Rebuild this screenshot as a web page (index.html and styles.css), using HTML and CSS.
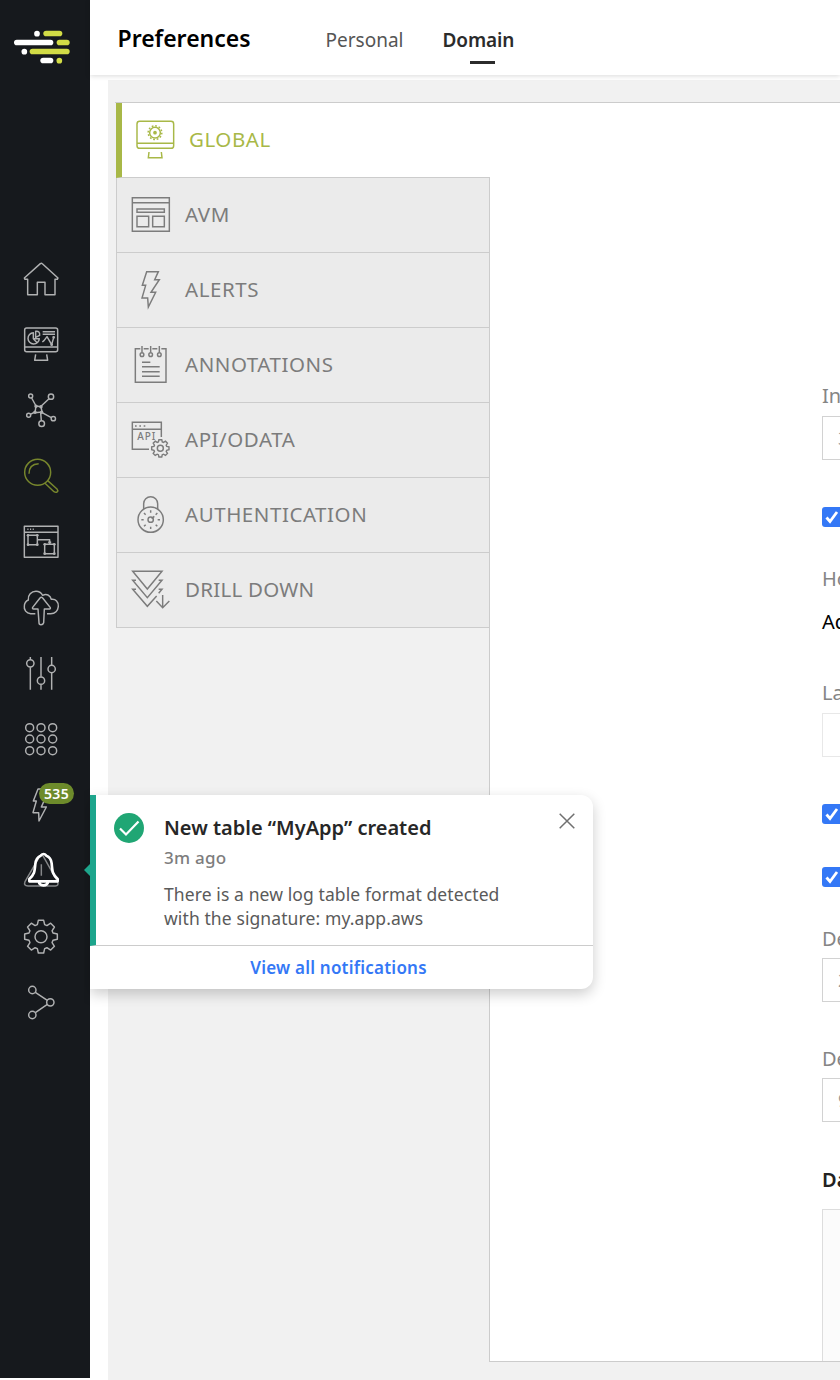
FILE: index.html
```html
<!DOCTYPE html>
<html lang="en">
<head>
<meta charset="utf-8">
<title>Preferences</title>
<link rel="stylesheet" href="styles.css">
</head>
<body>
<svg class="defs" width="0" height="0">
  <defs>
    <path id="gear" d="M-11-36L-8-49H8L11-36L17.7-33.2L29-40.3L40.3-29L33.2-17.7L36-11L49-8V8L36 11L33.2 17.7L40.3 29L29 40.3L17.7 33.2L11 36L8 49H-8L-11 36L-17.7 33.2L-29 40.3L-40.3 29L-33.2 17.7L-36 11L-49 8V-8L-36-11L-33.2-17.7L-40.3-29L-29-40.3L-17.7-33.2Z"/>
  </defs>
</svg>
<div class="app">
  <aside class="sidebar">
    <svg class="logo" viewBox="0 0 270 240">
      <g fill="#fff"><circle cx="111" cy="101" r="8.5"/><rect x="42" y="119" width="118" height="17" rx="8.5"/><circle cx="73" cy="155" r="8.5"/><rect x="121" y="173" width="39" height="17" rx="8.5"/></g>
      <g fill="#d2dc46"><rect x="130" y="92" width="57" height="17" rx="8.5"/><rect x="170" y="119" width="39" height="17" rx="8.5"/><rect x="89" y="146" width="120" height="17" rx="8.5"/><circle cx="178" cy="182" r="8.5"/></g>
    </svg>
    <nav class="nav">
      <svg class="icon" viewBox="0 -9 270 198"><path d="M83 134V88H75L73 84L121 41Q124 38 127 41L174 84L172 88H165V134H135V97H112V134Z"/></svg>
      <svg class="icon" viewBox="0 189 270 198"><rect x="74" y="234" width="99" height="71" rx="6"/><path d="M74 291H173M107 313L104 331H143L140 313M100 248A17 17 0 1 0 118 266H100ZM107 244Q120 242 119 256L107 262ZM100 266L112 279M128 245H165M128 253H165M127 276L132 272L141 260L155 284L161 263"/><circle cx="161" cy="262" r="2"/><circle cx="155" cy="284" r="2"/></svg>
      <svg class="icon" viewBox="0 387 270 198"><circle cx="92" cy="438" r="6"/><circle cx="153" cy="440" r="8"/><circle cx="86" cy="496" r="6"/><circle cx="125" cy="521" r="8.5"/><circle cx="160" cy="506" r="6.5"/><path d="M95 444L108 468M147 446L123 469M91 493L105 486M122 488L124 512M125 487L154 503M108 468L123 470L126 486L105 488Z"/><circle cx="108" cy="469" r="3"/><circle cx="123" cy="470" r="3"/><circle cx="105" cy="487" r="3"/><circle cx="125" cy="487" r="3"/></svg>
      <svg class="icon icon-current" viewBox="0 15 270 198"><circle cx="113" cy="97" r="39"/><path d="M87 101Q87 72 116 71M135 130L162 155Q168 159 172 155Q175 152 171 147L143 122"/></svg>
      <svg class="icon" viewBox="0 213 270 198"><path d="M73 259H174V352H73ZM73 277H174M84 286H112V314H84ZM134 313H163V341H134ZM113 299H149V309M145 305L149 310L153 305"/><path d="M82 268H102" stroke-dasharray="3.5 4.5"/><g class="solid"><circle cx="84" cy="286" r="4"/><circle cx="112" cy="286" r="4"/><circle cx="84" cy="314" r="4"/><circle cx="112" cy="314" r="4"/><circle cx="134" cy="313" r="4"/><circle cx="163" cy="313" r="4"/><circle cx="134" cy="341" r="4"/><circle cx="163" cy="341" r="4"/></g></svg>
      <svg class="icon" viewBox="0 411 270 198"><path d="M106 521H92C79 520 71 510 73 497C74 486 80 482 85 480C83 465 94 454 108 454C117 454 124 459 128 466C139 460 151 465 154 478C167 476 176 486 175 499C174 512 165 521 152 521H141"/><path d="M120 474Q124 470 128 474L151 503Q152 507 147 507H133L131 548Q129 554 123 554Q117 554 117 548L114 507H101Q96 507 98 502Z"/></svg>
      <svg class="icon" viewBox="0 9 270 198"><path d="M91 51V59M91 82V149M123 51V110M123 134V149M155 51V75M155 98V149"/><circle cx="91" cy="70" r="11"/><circle cx="123" cy="122" r="11"/><circle cx="155" cy="87" r="11"/></svg>
      <svg class="icon" viewBox="0 207 270 198"><circle cx="89" cy="263" r="12"/><circle cx="123" cy="263" r="12"/><circle cx="158" cy="263" r="12"/><circle cx="89" cy="297" r="12"/><circle cx="123" cy="297" r="12"/><circle cx="158" cy="297" r="12"/><circle cx="89" cy="332" r="12"/><circle cx="123" cy="332" r="12"/><circle cx="158" cy="332" r="12"/></svg>
      <div class="nav-alerts">
        <svg class="icon" viewBox="0 405 270 198"><path d="M135 447H114L100 483H109L99 518H116L117 543L139 501H124L138 470"/></svg>
        <span class="badge">535</span>
      </div>
      <svg class="icon" viewBox="0 3 270 198"><path class="dim" d="M119 49Q124 43 130 49L173 126Q177 137 166 138H84Q70 137 75 125ZM124 73V107"/><path class="bell" d="M122 47Q131 37 139 47Q153 52 155 70C157 97 158 103 173 117V124H88V117C103 103 104 96 106 72Q108 53 122 47ZM116 124Q118 136 130 136Q142 136 145 124"/></svg>
      <svg class="icon" viewBox="0 201 270 198"><use href="#gear" transform="translate(123 290)"/><circle cx="123" cy="290" r="18"/></svg>
      <svg class="icon" viewBox="0 399 270 198"><circle cx="97" cy="450" r="11"/><circle cx="151" cy="487" r="11"/><circle cx="97" cy="525" r="11"/><path d="M106 457L142 481M106 518L142 493"/></svg>
    </nav>
  </aside>

  <div class="page">
    <header class="header">
      <h1 class="title">Preferences</h1>
      <a class="head-tab">Personal</a>
      <a class="head-tab head-tab-active">Domain</a>
    </header>
    <main class="content">
      <section class="panel">
        <div class="tabs">
          <div class="tab tab-active">
            <svg class="tab-icon" viewBox="42 24 180 222"><rect x="87" y="79" width="110" height="81" rx="8"/><path d="M87 145H197M123 171L121 188H162L160 171"/><circle cx="141" cy="113" r="16"/><circle cx="141" cy="113" r="20.5" stroke-dasharray="5.4 5.33"/><circle class="solid" cx="141" cy="113" r="5.5"/></svg>
            <span>GLOBAL</span>
          </div>
          <div class="tab">
            <svg class="tab-icon" viewBox="27 249 180 222"><path d="M73 308H184V409H73ZM73 323H184M87 342H169V352H87ZM87 364H122V395H87ZM134 364H169V395H134Z"/></svg>
            <span>AVM</span>
          </div>
          <div class="tab">
            <svg class="tab-icon" viewBox="27 -6 180 222"><path d="M116 50H151L140 74H154L129 112H143L121 156L119 129H102L113 91H103Z"/></svg>
            <span>ALERTS</span>
          </div>
          <div class="tab">
            <svg class="tab-icon" viewBox="27 219 180 222"><path d="M97 281H82V382H174V281H160M107 281H122M133 281H148M102 273V292M128 273V292M154 273V292M102 322H127M102 335H155M102 350H155M102 364H155"/><circle cx="102" cy="299" r="5.5"/><circle cx="128" cy="299" r="5.5"/><circle cx="154" cy="299" r="5.5"/></svg>
            <span>ANNOTATIONS</span>
          </div>
          <div class="tab">
            <svg class="tab-icon" viewBox="27 -21 180 222"><path d="M123 118H73V37H160V81M73 58H160"/><path d="M81 48H113" stroke-dasharray="5 8"/><text x="88" y="89" font-size="30" textLength="54">API</text><use href="#gear" transform="translate(157 115) scale(.53)"/><circle cx="157" cy="115" r="9"/></svg>
            <span>API/ODATA</span>
          </div>
          <div class="tab">
            <svg class="tab-icon" viewBox="27 204 180 222"><circle cx="128" cy="329" r="38"/><path d="M107 297V281A21 21 0 0 1 149 281V297M128 301V308M128 350V357M100 329H107M149 329H156M108 309L113 314M143 344L148 349M108 349L113 344M143 314L148 309M131 326L139 319"/><circle cx="128" cy="329" r="8"/></svg>
            <span>AUTHENTICATION</span>
          </div>
          <div class="tab">
            <svg class="tab-icon" viewBox="27 429 180 222"><path d="M74 484H162L118 537ZM84 511H74L118 563L162 511H152M84 538H74L118 589L146 558M152 538H162L152 550M164 555V592M145 573L164 593L184 573"/></svg>
            <span class="t-drill">DRILL DOWN</span>
          </div>
        </div>
        <div class="form">
          <label class="label">In</label>
          <div class="input">3</div>
          <div class="check check-1"><svg viewBox="0 0 20 20"><path d="M4.5 10.5L8 14.5L15 5"/></svg></div>
          <label class="label label-2">Ho</label>
          <div class="value">Ad</div>
          <label class="label label-3">La</label>
          <div class="input input-faint"></div>
          <div class="check check-2"><svg viewBox="0 0 20 20"><path d="M4.5 10.5L8 14.5L15 5"/></svg></div>
          <div class="check check-3"><svg viewBox="0 0 20 20"><path d="M4.5 10.5L8 14.5L15 5"/></svg></div>
          <label class="label label-4">De</label>
          <div class="input">2</div>
          <label class="label label-5">De</label>
          <div class="input">9</div>
          <h2 class="section">Da</h2>
          <div class="area"></div>
        </div>
      </section>
    </main>
  </div>
</div>

<div class="toast">
  <div class="toast-body">
    <svg class="toast-ok" viewBox="0 0 30 30"><circle cx="15" cy="15" r="15"/><path d="M6 15.5L12 21.5L24.5 8.5"/></svg>
    <div class="toast-text">
      <div class="toast-title">New table “MyApp” created</div>
      <div class="toast-time">3m ago</div>
      <p class="toast-msg">There is a new log table format detected<br>with the signature: my.app.aws</p>
    </div>
    <svg class="toast-close" viewBox="0 0 16 16"><path d="M.7.7L15.3 15.3M15.3.7L.7 15.3"/></svg>
  </div>
  <div class="toast-foot"><a class="toast-link">View all notifications</a></div>
</div>
</body>
</html>
```
FILE: styles.css
```css
* { box-sizing: border-box; }
body { margin: 0; background: #fff; font-family: "Noto Sans", "Open Sans", sans-serif; overflow: hidden; }
.defs { display: block; }
.app { display: flex; width: 840px; height: 1380px; overflow: hidden; }

/* Sidebar */
.sidebar { width: 90px; height: 1378px; flex: none; background: #16191d; }
.logo { display: block; width: 90px; height: 80px; }
.nav { display: flex; flex-direction: column; padding-top: 167px; }
.icon { display: block; width: 90px; height: 66px; fill: none; stroke: #b0b1b2; stroke-width: 4.4; stroke-linejoin: round; }
.icon-current { stroke: #77862d; }
.icon .solid { fill: #b0b1b2; stroke: none; }
.icon .dim { stroke: #858789; }
.icon .bell { stroke: #fff; stroke-width: 8; }
.nav-alerts { position: relative; }
.badge { position: absolute; left: 39px; top: 8px; width: 35px; height: 21px; border-radius: 11px; background: #6d8b2b; color: #fff; font-size: 14px; font-weight: 600; line-height: 21px; text-align: center; letter-spacing: .3px; }

/* Header */
.page { flex: 1; min-width: 0; display: flex; flex-direction: column; }
.header { display: flex; height: 75px; flex: none; padding-left: 27.5px; background: #fff; box-shadow: 0 1px 5px rgba(0,0,0,.15); z-index: 1; }
.title { margin: 0; width: 208px; font-size: 23px; line-height: 76px; font-weight: 600; color: #000; }
.head-tab { width: 117px; font-size: 19px; line-height: 80px; color: #555; }
.head-tab-active { font-weight: 600; color: #2b2b2b; width: 80px; background: linear-gradient(#2b2b2b, #2b2b2b) 27px 61px / 25px 3px no-repeat; letter-spacing: -.1px; }

/* Panel */
.content { flex: 1; margin: 5px 0 0 18px; padding: 22px 0 0 7px; background: #f1f1f1; }
.panel { display: flex; height: 1260px; border-top: 1px solid #ccc; background: #fff; overflow: hidden; }
.tabs { width: 375px; flex: none; padding-left: 1px; background: linear-gradient(#ccc, #ccc) 374px 75px / 1px 100% no-repeat, #f1f1f1; }
.tab { display: flex; align-items: center; height: 75px; border: 1px solid #ccc; border-top: 0; background: #ebebeb; color: #7c7c7c; font-size: 20.5px; letter-spacing: .55px; }
.tab span { margin-left: 8px; padding-bottom: 2px; white-space: nowrap; }
.tab .t-drill { letter-spacing: .25px; }
.tab-active { border-left: 6px solid #a8b847; border-right: 0; background: #fff; color: #a8b847; }
.tab-active span { margin-left: 7px; }
.tab-icon { width: 60px; height: 74px; fill: none; stroke: currentColor; stroke-width: 4.4; }
.tab-icon use { stroke-width: 8; }
.tab-icon .solid { fill: currentColor; stroke: none; }
.tab-icon text { fill: currentColor; stroke: none; font-weight: 500; letter-spacing: 0; }

/* Form */
.form { flex: none; width: 500px; padding: 281px 0 0 332px; border-bottom: 1px solid #ccc; overflow: hidden; }
.label, .value, .section { display: block; height: 24px; font-size: 20px; line-height: 24px; color: #858585; }
.label { margin-bottom: 8px; }
.input { width: 160px; height: 44px; padding-left: 15px; border: 1px solid #d2d2d2; font-size: 18px; line-height: 43px; color: #999; }
.input-faint { border-color: #e8e8e8; }
.check { width: 20px; height: 20px; border-radius: 3px; background: #3478f6; }
.check svg { display: block; fill: none; stroke: #fff; stroke-width: 2.8; }
.check-1 { margin-top: 47px; }
.label-2 { margin-top: 40px; }
.value { color: #000; margin-top: 19px; }
.label-3 { margin-top: 47px; }
.check-2 { margin-top: 47px; }
.check-3 { margin-top: 43px; }
.label-4 { margin-top: 40px; margin-bottom: 7px; }
.label-5 { margin-top: 45px; margin-bottom: 7px; }
.section { margin: 46px 0 17px; color: #222; font-weight: 600; }
.area { width: 160px; height: 180px; border: 1px solid #ddd; background: #fbfbfb; }

/* Notification */
.toast { position: absolute; left: 90px; top: 795px; width: 503px; height: 194px; border-radius: 0 12px 12px 0; background: #fff; box-shadow: 0 5px 14px rgba(0,0,0,.2); clip-path: inset(-30px -30px -30px -6px); }
.toast::before { content: ""; position: absolute; left: -6px; top: 69px; border: solid transparent; border-width: 6px 6px 6px 0; border-right-color: #1da58c; }
.toast-body { display: flex; height: 151px; padding: 18px 18px 0 18px; border-left: 6px solid #1da58c; border-bottom: 1px solid #ccc; }
.toast-ok { width: 30px; height: 30px; fill: #20a674; flex: none; }
.toast-ok path { fill: none; stroke: #fff; stroke-width: 2.2; }
.toast-text { flex: 1; margin-left: 20px; white-space: nowrap; }
.toast-title { font-size: 20px; line-height: 30px; font-weight: 600; color: #272727; }
.toast-time { font-size: 17px; line-height: 30px; font-weight: 500; color: #7d7d7d; letter-spacing: .25px; }
.toast-msg { margin: 9px 0 0; font-size: 17.5px; line-height: 24px; color: #5a5a5a; letter-spacing: .1px; }
.toast-close { width: 16px; height: 16px; fill: none; stroke: #707070; stroke-width: 1.5; flex: none; }
.toast-foot { height: 43px; line-height: 43px; padding-right: 6px; text-align: center; }
.toast-link { color: #3478f6; font-size: 17px; font-weight: 600; letter-spacing: .22px; }
```
